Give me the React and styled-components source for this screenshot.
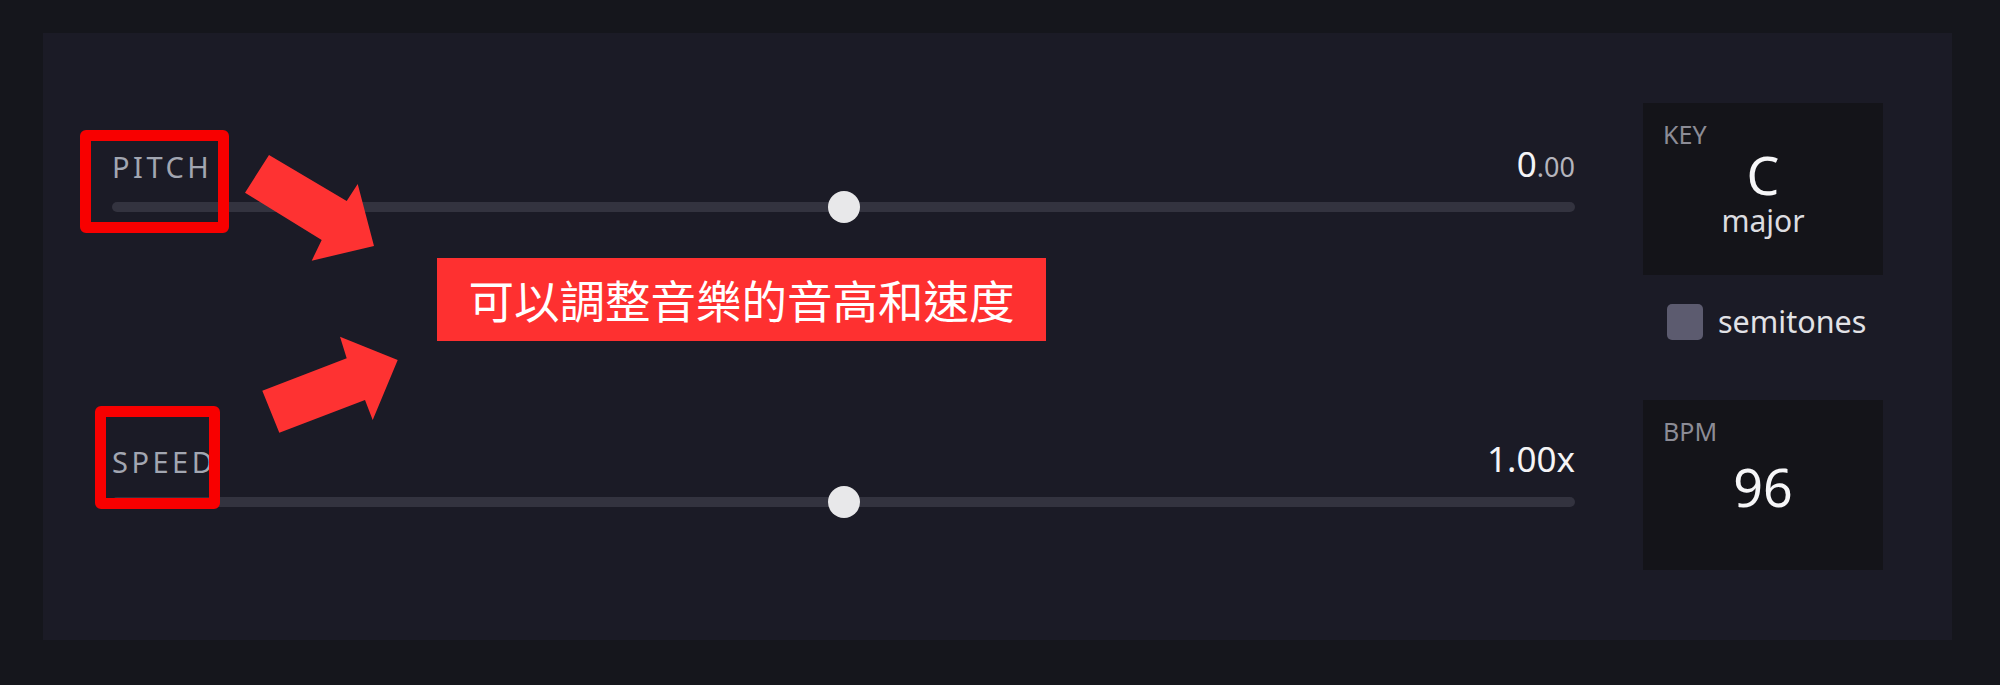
import React from "react";
import styled, { createGlobalStyle } from "styled-components";

const GlobalStyle = createGlobalStyle`
  html, body {
    margin: 0;
    padding: 0;
    background: #15161c;
  }
  body {
    font-family: "Noto Sans", "Noto Sans CJK TC", sans-serif;
  }
`;

const sliders = [
  { id: "pitch", label: "PITCH", value: 0, min: -12, max: 12 },
  { id: "speed", label: "SPEED", value: 1, min: 0.5, max: 1.5 },
];

const App = () => {
  return (
    <Page>
      <GlobalStyle />
      <Panel>
        <SliderColumn>
          {sliders.map(({ id, label, value, min, max }) => {
            const pct = ((value - min) / (max - min)) * 100;
            return (
              <SliderBlock key={id}>
                <SliderHeader>
                  <SliderLabel>{label}</SliderLabel>
                  {id === "pitch" ? (
                    <Value>
                      {Math.trunc(value)}
                      <Decimals>.{value.toFixed(2).split(".")[1]}</Decimals>
                    </Value>
                  ) : (
                    <Value>{value.toFixed(2)}x</Value>
                  )}
                </SliderHeader>
                <TrackWrap>
                  <Track />
                  <Thumb style={{ left: `${pct}%` }} />
                </TrackWrap>
              </SliderBlock>
            );
          })}
        </SliderColumn>

        <SideColumn>
          <InfoCard>
            <CardLabel>KEY</CardLabel>
            <BigValue>C</BigValue>
            <SubValue>major</SubValue>
          </InfoCard>
          <CheckRow>
            <CheckBox />
            <CheckText>semitones</CheckText>
          </CheckRow>
          <InfoCard $bottom>
            <CardLabel>BPM</CardLabel>
            <BigValue $gap={17}>96</BigValue>
          </InfoCard>
        </SideColumn>
      </Panel>

      {/* annotation layer drawn over the screenshot */}
      <Highlight $x={80} $y={130} $w={149} $h={103} />
      <Highlight $x={95} $y={406} $w={125} $h={103} />
      <Arrows viewBox="0 0 2000 685" width="2000" height="685">
        <polygon points="269,155 346.7,201 357.7,184 374,246 311.7,260.7 321.7,240 245,192.7" />
        <polygon points="262.3,390.7 346.7,358.3 340,336.7 397.7,360 372.7,420 365,400 279.3,432.7" />
      </Arrows>
      <Callout>可以調整音樂的音高和速度</Callout>
    </Page>
  );
};

export default App;

const Page = styled.div`
  position: relative;
  width: 2000px;
  height: 685px;
  box-sizing: border-box;
  padding: 33px 48px 45px 43px;
  background: #15161c;
  overflow: hidden;
`;

const Panel = styled.section`
  display: flex;
  gap: 68px;
  height: 100%;
  box-sizing: border-box;
  padding: 70px 69px;
  background: #1b1b26;
`;

const SliderColumn = styled.div`
  flex: 1;
  display: flex;
  flex-direction: column;
  gap: 213px;
  padding-top: 38px;
`;

const SliderBlock = styled.div`
  display: flex;
  flex-direction: column;
  gap: 10px;
`;

const SliderHeader = styled.div`
  display: flex;
  justify-content: space-between;
  align-items: flex-end;
  height: 40px;
`;

const SliderLabel = styled.span`
  font-size: 29px;
  line-height: 1;
  letter-spacing: 3.5px;
  color: #a2a6b1;
`;

const Value = styled.span`
  font-size: 35px;
  line-height: 1;
  color: #f4f4f6;
`;

const Decimals = styled.span`
  font-size: 27px;
  color: #b4b4bc;
`;

const TrackWrap = styled.div`
  position: relative;
  height: 32px;
  display: flex;
  align-items: center;
`;

const Track = styled.div`
  width: 100%;
  height: 10px;
  border-radius: 5px;
  background: #33333f;
`;

const Thumb = styled.div`
  position: absolute;
  top: 0;
  width: 32px;
  height: 32px;
  margin-left: -16px;
  border-radius: 50%;
  background: #e8e8ea;
`;

const SideColumn = styled.aside`
  width: 240px;
  display: flex;
  flex-direction: column;
`;

const InfoCard = styled.div`
  height: ${({ $bottom }) => ($bottom ? 171 : 172)}px;
  box-sizing: border-box;
  padding: 19px 20px;
  background: #141419;
  display: flex;
  flex-direction: column;
  align-items: center;
`;

const CardLabel = styled.span`
  align-self: flex-start;
  font-size: 25px;
  line-height: 1;
  color: #8c8c96;
`;

const BigValue = styled.span`
  margin-top: ${({ $gap }) => $gap ?? 2}px;
  font-size: 52px;
  line-height: 1;
  color: #f6f6f8;
`;

const SubValue = styled.span`
  margin-top: 5px;
  font-size: 30px;
  line-height: 1;
  color: #dcdce0;
`;

const CheckRow = styled.label`
  display: flex;
  align-items: center;
  gap: 15px;
  height: 36px;
  margin: 29px 0 60px 24px;
`;

const CheckBox = styled.span`
  width: 36px;
  height: 36px;
  border-radius: 5px;
  background: #5c5b6f;
`;

const CheckText = styled.span`
  font-size: 30.5px;
  line-height: 1;
  color: #e2e2e6;
`;

const Highlight = styled.div`
  position: absolute;
  left: ${({ $x }) => $x}px;
  top: ${({ $y }) => $y}px;
  width: ${({ $w }) => $w}px;
  height: ${({ $h }) => $h}px;
  box-sizing: border-box;
  border: 11px solid #f80000;
  border-radius: 6px;
`;

const Arrows = styled.svg`
  position: absolute;
  left: 0;
  top: 0;
  pointer-events: none;

  polygon {
    fill: #fe3232;
  }
`;

const Callout = styled.div`
  position: absolute;
  left: 437px;
  top: 258px;
  width: 609px;
  height: 83px;
  display: flex;
  align-items: center;
  justify-content: center;
  background: #fe3030;
  color: #ffffff;
  font-family: "Noto Sans CJK TC", sans-serif;
  font-size: 45.5px;
  line-height: 1;
`;
